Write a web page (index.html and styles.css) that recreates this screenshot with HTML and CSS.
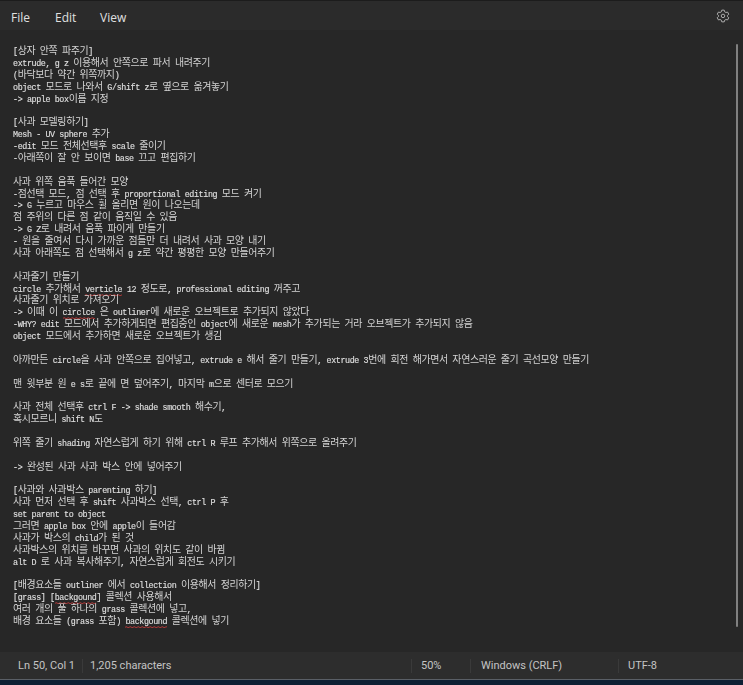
FILE: index.html
```html
<!DOCTYPE html>
<html lang="ko">
<head>
<meta charset="utf-8">
<title>Notepad</title>
<link rel="stylesheet" href="styles.css">
</head>
<body>
<div class="window">
  <header class="menubar">
    <nav class="menu">
      <span class="menu-item menu-file">File</span>
      <span class="menu-item menu-edit">Edit</span>
      <span class="menu-item">View</span>
    </nav>
    <svg class="gear" viewBox="0 0 16 16" width="14" height="14" fill="none" stroke="#bcbcbc" stroke-width="1">
      <path d="M6.6 1.3h2.8l.5 1.9 1.4.8 1.9-.5 1.4 2.4-1.4 1.4v1.4l1.4 1.4-1.4 2.4-1.9-.5-1.4.8-.5 1.9H6.6l-.5-1.9-1.4-.8-1.9.5L1.4 10l1.4-1.4V7.2L1.4 5.9l1.4-2.4 1.9.5 1.4-.8z"/>
      <circle cx="8" cy="7.9" r="2"/>
    </svg>
  </header>
  <main class="editor">
    <div class="scrollbar"></div>
<pre class="text" id="note">[상자 안쪽 파주기]
extrude, g z 이용해서 안쪽으로 파서 내려주기
(바닥보다 약간 위쪽까지)
object 모드로 나와서 G/shift z로 옆으로 옮겨놓기
-&gt; apple box이름 지정

[사과 모델링하기]
Mesh - UV sphere 추가
-edit 모드 전체선택후 scale 줄이기
-아래쪽이 잘 안 보이면 base 끄고 편집하기

사과 위쪽 움푹 들어간 모양
-점선택 모드, 점 선택 후 proportional editing 모드 켜기
-&gt; G 누르고 마우스 휠 올리면 원이 나오는데
점 주위의 다른 점 같이 움직일 수 있음
-&gt; G Z로 내려서 움푹 파이게 만들기
- 원을 줄여서 다시 가까운 점들만 더 내려서 사과 모양 내기
사과 아래쪽도 점 선택해서 g z로 약간 평평한 모양 만들어주기

사과줄기 만들기
circle 추가해서 <span class="typo">verticle</span> 12 정도로, professional editing 꺼주고
사과줄기 위치로 가져오기
-&gt; 이때 이 <span class="typo">circlce</span> 은 outliner에 새로운 오브젝트로 추가되지 않았다
-WHY? edit 모드에서 추가하게되면 편집중인 object에 새로운 mesh가 추가되는 거라 오브젝트가 추가되지 않음
object 모드에서 추가하면 새로운 오브젝트가 생김

아까만든 circle을 사과 안쪽으로 집어넣고, extrude e 해서 줄기 만들기, extrude 3번에 회전 해가면서 자연스러운 줄기 곡선모양 만들기

맨 윗부분 원 e s로 끝에 면 덮어주기, 마지막 m으로 센터로 모으기

사과 전체 선택후 ctrl F -&gt; shade smooth 해수기,
혹시모르니 shift N도

위쪽 줄기 shading 자연스럽게 하기 위해 ctrl R 루프 추가해서 위쪽으로 올려주기

-&gt; 완성된 사과 사과 박스 안에 넣어주기

[사과와 사과박스 parenting 하기]
사과 먼저 선택 후 shift 사과박스 선택, ctrl P 후
set parent to object
그러면 apple box 안에 apple이 들어감
사과가 박스의 child가 된 것
사과박스의 위치를 바꾸면 사과의 위치도 같이 바뀜
alt D 로 사과 복사해주기, 자연스럽게 회전도 시키기

[배경요소들 outliner 에서 collection 이용해서 정리하기]
[grass] [<span class="typo">backgound</span>] 콜렉션 사용해서
여러 개의 풀 하나의 grass 콜렉션에 넣고,
배경 요소들 (grass 포함) <span class="typo">backgound</span> 콜렉션에 넣기</pre>
  </main>
  <footer class="status">
    <span class="cell cell-pos">Ln 50, Col 1</span>
    <span class="cell cell-count">1,205 characters</span>
    <span class="cell cell-zoom">50%</span>
    <span class="cell cell-eol">Windows (CRLF)</span>
    <span class="cell cell-enc">UTF-8</span>
  </footer>
</div>
<div class="taskbar"></div>
<script src="script.js"></script>
</body>
</html>
```
FILE: styles.css
```css
* { box-sizing: border-box; }
html, body { margin: 0; height: 100%; background: #272727; overflow: hidden; }
body { display: flex; flex-direction: column; }
.window { flex: 1; display: flex; flex-direction: column; min-height: 0; }
.menubar {
  height: 30px; background: #2b2b2b; border-top: 1px solid #1c1c1c;
  display: flex; align-items: center; justify-content: space-between; padding: 0 13px 0 11px;
  flex: none;
}
.menu { display: flex; padding-top: 3px; }
.menu-item { font: 12px "Open Sans", "Liberation Sans", sans-serif; color: #e0e0e0; }
.menu-file { width: 44px; }
.menu-edit { width: 45px; }
.gear { display: block; }
.editor { flex: 1; min-height: 0; background: #272727; padding: 17px 0 0 13px; position: relative; overflow: hidden; }
.text {
  margin: 0; font: 8.4px/11.88px "Liberation Mono", monospace;
  letter-spacing: -0.39px; color: #e0e0e0; -webkit-text-stroke: 0.12px #e0e0e0; filter: blur(0.25px);
}
.ko {
  font-family: "Noto Sans CJK KR", sans-serif; font-size: 9.96px; line-height: 0;
  color: #d4d4d4; -webkit-text-stroke: 0;
}
.typo {
  padding-bottom: 1px;
  background: url("data:image/svg+xml,%3Csvg xmlns='http://www.w3.org/2000/svg' width='4' height='2'%3E%3Cpath d='M0 1.5Q1 0 2 1T4 1.5' fill='none' stroke='%23d23c3c' stroke-width='.8'/%3E%3C/svg%3E") repeat-x left bottom;
}
.scrollbar { position: absolute; right: 5px; top: 14px; width: 2px; height: 583px; background: #808080; border-radius: 1px; }
.status {
  height: 27px; flex: none; background: #2d2d2d; display: flex; align-items: center;
  font: 11px Roboto, "Liberation Sans", sans-serif; color: #c4c4c4;
}
.cell { height: 14px; line-height: 14px; border-right: 1px solid #3a3a3a; }
.cell-pos { width: 83px; padding-left: 18px; }
.cell-count { width: 329px; padding-left: 7px; }
.cell-zoom { width: 59px; padding-left: 9px; }
.cell-eol { width: 148px; padding-left: 10px; }
.cell-enc { border-right: 0; padding-left: 9px; }
.taskbar { height: 6px; flex: none; background: #0e2034; border-top: 1px solid #5a5f66; }
```
FILE: script.js
```js
// Hangul runs are set larger than the Latin text, as the editor's font fallback does.
const walker = document.createTreeWalker(document.getElementById('note'), NodeFilter.SHOW_TEXT);
const nodes = [];
while (walker.nextNode()) nodes.push(walker.currentNode);
for (const node of nodes) {
  const frag = document.createDocumentFragment();
  for (const part of node.data.split(/([\uAC00-\uD7A3]+)/)) {
    if (/^[\uAC00-\uD7A3]+$/.test(part)) {
      const span = document.createElement('span');
      span.className = 'ko';
      span.textContent = part;
      frag.appendChild(span);
    } else if (part) {
      frag.appendChild(document.createTextNode(part));
    }
  }
  node.replaceWith(frag);
}
```
